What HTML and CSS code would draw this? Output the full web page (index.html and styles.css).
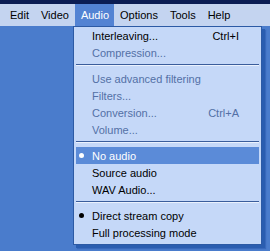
FILE: index.html
```html
<!DOCTYPE html>
<html lang="en">
<head>
  <meta charset="UTF-8" />
  <title>Audio menu</title>
  <link rel="stylesheet" href="styles.css">
</head>
<body>
  <div class="titlebar"></div>
  <div class="menubar">
    <span class="top-item">Edit</span>
    <span class="top-item">Video</span>
    <span class="top-item active">Audio</span>
    <span class="top-item">Options</span>
    <span class="top-item">Tools</span>
    <span class="top-item">Help</span>
  </div>

  <div class="workspace">
    <div class="popup">
      <div class="item"><span class="label">Interleaving...</span><span class="key">Ctrl+I</span></div>
      <div class="item disabled"><span class="label">Compression...</span></div>
      <div class="sep"></div>
      <div class="item disabled"><span class="label">Use advanced filtering</span></div>
      <div class="item disabled"><span class="label">Filters...</span></div>
      <div class="item disabled"><span class="label">Conversion...</span><span class="key">Ctrl+A</span></div>
      <div class="item disabled"><span class="label">Volume...</span></div>
      <div class="sep"></div>
      <div class="item hover checked"><span class="label">No audio</span></div>
      <div class="item"><span class="label">Source audio</span></div>
      <div class="item"><span class="label">WAV Audio...</span></div>
      <div class="sep"></div>
      <div class="item checked"><span class="label">Direct stream copy</span></div>
      <div class="item"><span class="label">Full processing mode</span></div>
    </div>
  </div>
</body>
</html>
```

FILE: styles.css
```css
body {
  margin: 0;
  width: 270px;
  height: 251px;
  overflow: hidden;
  background: #4a7ccc;
  font-family: Tahoma, "Liberation Sans", sans-serif;
  font-size: 11px;
  color: #000;
}
.titlebar {
  height: 4px;
  background: #0b1d54;
}
.menubar {
  height: 22px;
  background: #c4d4f0;
  display: flex;
  padding-left: 4px;
}
.top-item {
  padding: 0 6px;
  line-height: 22px;
}
.top-item.active {
  background: #5383d3;
  color: #fff;
  padding-right: 5px;
}
.workspace {
  padding-left: 73px;
}
.popup {
  width: 187px;
  background: #c5d8f8;
  border: 1px solid #2c5aa5;
  padding: 0 0 3px;
  box-shadow: 3px 3px 0 #2a5db0, 4px 4px 1px #3868bb;
}
.item {
  height: 17px;
  display: flex;
  align-items: center;
  padding: 0 22px 0 18px;
  position: relative;
}
.item .label {
  flex: 1;
}
.item.disabled {
  color: #5370a6;
}
.item.hover {
  background: #5b8bd8;
  color: #fff;
  margin: 0 2px;
  padding-left: 16px;
  padding-right: 20px;
}
.item.checked::before {
  content: "";
  position: absolute;
  left: 5px;
  top: 6px;
  width: 5px;
  height: 5px;
  border-radius: 50%;
  background: #000;
}
.item.hover.checked::before {
  left: 3px;
  background: #fff;
}
.sep {
  height: 1px;
  margin: 3px 2px 4px;
  background: #3a5d9c;
  border-bottom: 1px solid #eaf1fd;
}
```
